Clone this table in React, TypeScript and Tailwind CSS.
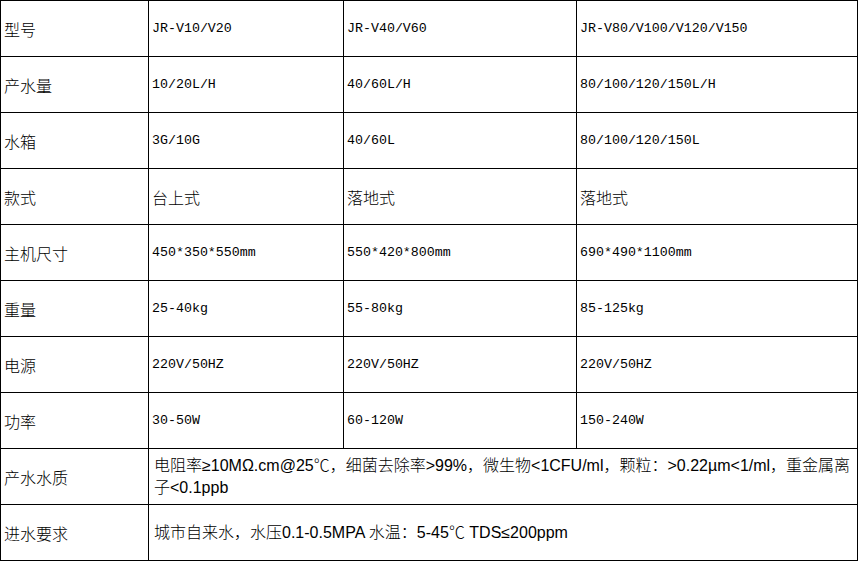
import React from 'react';

const rows: [string, string, string, string][] = [
  ['型号', 'JR-V10/V20', 'JR-V40/V60', 'JR-V80/V100/V120/V150'],
  ['产水量', '10/20L/H', '40/60L/H', '80/100/120/150L/H'],
  ['水箱', '3G/10G', '40/60L', '80/100/120/150L'],
  ['款式', '台上式', '落地式', '落地式'],
  ['主机尺寸', '450*350*550mm', '550*420*800mm', '690*490*1100mm'],
  ['重量', '25-40kg', '55-80kg', '85-125kg'],
  ['电源', '220V/50HZ', '220V/50HZ', '220V/50HZ'],
  ['功率', '30-50W', '60-120W', '150-240W'],
];

const cjk = "font-['Noto_Sans_CJK_SC',sans-serif] font-light text-[16px]";
const mono = "font-['Liberation_Mono','Noto_Sans_CJK_SC',monospace] text-[13.3px]";
const sans = "font-['Liberation_Sans','Noto_Sans_CJK_SC',sans-serif] font-light text-[16px] leading-[22px]";

// values that are pure CJK text get the sans CJK face, the rest look like SimSun ascii
const isCjk = (s: string) => /^[\u4e00-\u9fff]+$/.test(s);

function Cell({ v }: { v: string }) {
  return (
    <td className={`border border-black pl-[3px] align-middle text-black ${isCjk(v) ? cjk : mono}`}>
      {v}
    </td>
  );
}

export default function App() {
  return (
    <div className="w-[858px] h-[562px] bg-white">
      <table className="border-collapse table-fixed w-[857px]">
        <colgroup>
          <col className="w-[148px]" />
          <col className="w-[195px]" />
          <col className="w-[233px]" />
          <col className="w-[281px]" />
        </colgroup>
        <tbody>
          {rows.map(r => (
            <tr key={r[0]} className="h-[56px]">
              <td className={`border border-black pl-[3px] pt-[1px] text-black ${cjk}`}>{r[0]}</td>
              <Cell v={r[1]} />
              <Cell v={r[2]} />
              <Cell v={r[3]} />
            </tr>
          ))}
          <tr className="h-[56px]">
            <td className={`border border-black pl-[3px] text-black ${cjk}`}>产水水质</td>
            <td colSpan={3} className={`border border-black pl-[5px] text-black ${sans}`}>
              <span className="block whitespace-nowrap">
                电阻率≥10MΩ.cm@25℃，细菌去除率&gt;99%，微生物&lt;1CFU/ml，颗粒：&gt;0.22µm&lt;1/ml，重金属离
              </span>
              <span className="block whitespace-nowrap">子&lt;0.1ppb</span>
            </td>
          </tr>
          <tr className="h-[56px]">
            <td className={`border border-black pl-[3px] text-black ${cjk}`}>进水要求</td>
            <td colSpan={3} className={`border border-black pl-[5px] text-black ${sans}`}>
              城市自来水，水压0.1-0.5MPA 水温：5-45℃ TDS≤200ppm
            </td>
          </tr>
        </tbody>
      </table>
    </div>
  );
}
